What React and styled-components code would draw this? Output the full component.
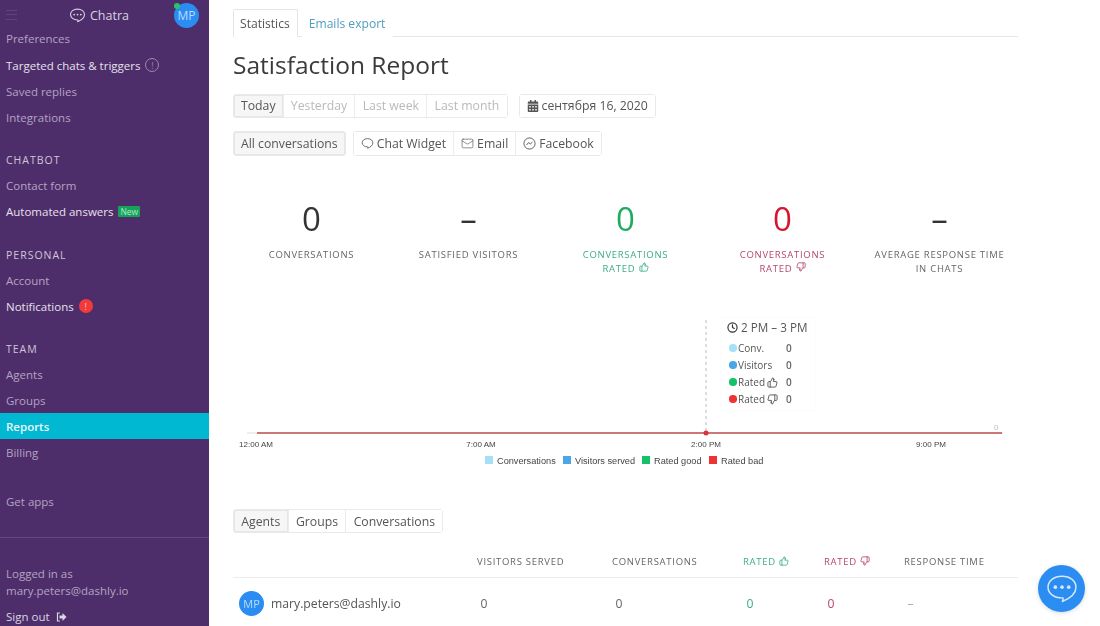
import React from "react";
import styled, { createGlobalStyle } from "styled-components";
import { ThumbsUp, ThumbsDown, Clock, Mail } from "lucide-react";
import { FaCalendarAlt } from "react-icons/fa";

const Global = createGlobalStyle`
  html, body { margin: 0; padding: 0; background: #fff; overflow: hidden; }
  * { box-sizing: border-box; }
  body { font-family: "Open Sans", "Liberation Sans", sans-serif; color: #333; }
`;

const Page = styled.div`
  position: relative;
  display: flex;
  width: 1100px;
  height: 626px;
  overflow: hidden;
  filter: blur(0.45px);
`;

const Sidebar = styled.aside`
  width: 209px;
  flex: none;
  background: #4e2e6a;
  display: flex;
  flex-direction: column;
  font-size: 11.5px;
`;

const SideHeader = styled.div`
  position: relative;
  height: 25px;
  flex: none;
  display: flex;
  align-items: center;
  justify-content: center;
  gap: 4px;
  padding: 5px 11px 0 0;
  color: #d9d2e1;
  font-size: 12.5px;
`;

const Burger = styled.span`
  position: absolute;
  left: 6px;
  top: 10px;
  width: 11px;
  height: 10px;
  border-top: 1px solid #5f4379;
  border-bottom: 1px solid #5f4379;
  &::after {
    content: "";
    display: block;
    margin-top: 3px;
    border-top: 1px solid #5f4379;
  }
`;

const Avatar = styled.span`
  position: relative;
  display: flex;
  align-items: center;
  justify-content: center;
  flex: none;
  width: ${(p) => p.$size}px;
  height: ${(p) => p.$size}px;
  border-radius: 50%;
  background: #2b8cf2;
  color: #b9dcfb;
  font-size: ${(p) => p.$font}px;
`;

const SideAvatar = styled(Avatar)`
  position: absolute;
  left: 174px;
  top: 3px;
  &::before {
    content: "";
    position: absolute;
    left: 0;
    top: 0;
    width: 6px;
    height: 6px;
    border-radius: 50%;
    background: #27c46b;
  }
`;

const NavItem = styled.div`
  height: 26px;
  flex: none;
  display: flex;
  align-items: center;
  gap: 5px;
  padding: 0 0 0 6px;
  margin-top: ${(p) => p.$gap || 0}px;
  color: ${(p) => (p.$active ? "#eef6f9" : p.$bright ? "#e6e0ec" : "#b3a3c3")};
  background: ${(p) => (p.$active ? "#00b8d2" : "transparent")};
  font-weight: ${(p) => (p.$active ? 600 : 400)};
`;

const NavHeading = styled.div`
  height: 26px;
  flex: none;
  display: flex;
  align-items: center;
  padding: 2px 0 0 6px;
  margin-top: ${(p) => p.$gap}px;
  color: #cfc6d9;
  font-size: 10.5px;
  letter-spacing: 1px;
`;

const InfoBadge = styled.span`
  width: 14px;
  height: 14px;
  border-radius: 50%;
  border: 1px solid #9c89ae;
  color: #9c89ae;
  font-size: 9px;
  display: flex;
  align-items: center;
  justify-content: center;
`;

const NewBadge = styled.span`
  background: #15a35b;
  color: #b4e6c9;
  font-size: 8.5px;
  line-height: 11px;
  padding: 0 2px;
  border-radius: 1px;
`;

const AlertBadge = styled.span`
  width: 14px;
  height: 14px;
  border-radius: 50%;
  background: #f33a3a;
  color: #ffc9c9;
  font-size: 9px;
  display: flex;
  align-items: center;
  justify-content: center;
`;

const SideRule = styled.div`
  height: 1px;
  flex: none;
  margin-top: 23px;
  background: #64477f;
`;

const LoggedIn = styled.div`
  margin-top: 27px;
  padding-left: 6px;
  line-height: 17px;
  color: #b3a3c3;
`;

const SignOut = styled.div`
  display: flex;
  align-items: center;
  gap: 6px;
  margin-top: 9px;
  padding-left: 6px;
  line-height: 17px;
  color: #dcd5e3;
`;

const Main = styled.main`
  width: 785px;
  margin-left: 24px;
  flex: none;
  display: flex;
  flex-direction: column;
`;

const Tabs = styled.div`
  display: flex;
  height: 37px;
  flex: none;
  padding-top: 9px;
  border-bottom: 1px solid #e6e6e6;
`;

const Tab = styled.div`
  height: 28px;
  padding: 0 7px 0 6px;
  margin-right: 4px;
  display: flex;
  align-items: center;
  font-size: 12.1px;
  color: ${(p) => (p.$active ? "#555" : "#4f9dbf")};
  background: #fff;
  border: 1px solid ${(p) => (p.$active ? "#e6e6e6" : "transparent")};
  border-bottom: 0;
  border-radius: 2px 2px 0 0;
`;

const Title = styled.h1`
  margin: 10px 0 0;
  height: 36px;
  line-height: 36px;
  font-size: 24.5px;
  font-weight: 400;
  color: #3b3b3b;
`;

const Row = styled.div`
  display: flex;
  gap: ${(p) => p.$gap || 0}px;
  margin-top: ${(p) => p.$top}px;
  flex: none;
`;

const Group = styled.div`
  display: flex;
  height: ${(p) => p.$h || 24}px;
  border: 1px solid #e9e9e9;
  border-radius: 3px;
  background: #fff;
`;

const Seg = styled.div`
  display: flex;
  align-items: center;
  gap: 3px;
  padding: 0 ${(p) => p.$pad || 7}px ${(p) => (p.$flat ? 0 : 1)}px;
  font-size: 12.25px;
  color: ${(p) => (p.$muted ? "#b9b9b9" : "#555")};
  background: ${(p) => (p.$on ? "#f6f6f6" : "#fff")};
  border-right: 1px solid #ececec;
  box-shadow: ${(p) => (p.$on ? "inset 0 0 0 1px #e6e6e6" : "none")};
  &:last-child { border-right: 0; }
`;

const Stats = styled.div`
  display: grid;
  grid-template-columns: repeat(5, 1fr);
  margin-top: 41px;
  flex: none;
`;

const Stat = styled.div`
  display: flex;
  flex-direction: column;
  align-items: center;
  text-align: center;
`;

const StatValue = styled.div`
  height: 44px;
  line-height: 44px;
  font-size: 33px;
  color: ${(p) => p.$color || "#333"};
`;

const StatLabel = styled.div`
  margin-top: 7px;
  font-size: 9.5px;
  line-height: 14px;
  letter-spacing: 0.72px;
  color: ${(p) => p.$color || "#666"};
`;

const Chart = styled.div`
  position: relative;
  height: 170px;
  margin-top: 30px;
  flex: none;
`;

const ChartSvg = styled.svg`
  position: absolute;
  left: 0;
  top: 0;
  width: 785px;
  height: 170px;
  font-family: "Liberation Sans", Arial, sans-serif;
`;

const ChartTip = styled.div`
  position: absolute;
  left: 489px;
  top: 12px;
  width: 93px;
  height: 92px;
  padding: 1px 0 0 7px;
  background: rgba(255, 255, 255, 0.9);
  box-shadow: 0 0 3px rgba(0, 0, 0, 0.04);
  color: #555;
`;

const TipTitle = styled.div`
  display: flex;
  align-items: center;
  gap: 3px;
  margin-left: -2px;
  font-size: 11.7px;
  line-height: 17px;
  margin-bottom: 3.5px;
`;

const TipRow = styled.div`
  display: flex;
  align-items: center;
  height: 17px;
  font-size: 10px;
`;

const Dot = styled.span`
  width: 7.5px;
  height: 7.5px;
  border-radius: 50%;
  background: ${(p) => p.$c};
  margin-right: 1.5px;
`;

const TipLabel = styled.span`
  display: flex;
  align-items: center;
  gap: 2px;
  width: 48px;
`;

const TipValue = styled.span`
  font-weight: 600;
  color: #666;
`;

const TableHead = styled.div`
  display: grid;
  grid-template-columns: 244px 135px 131px 81px 80px 1fr;
  align-items: center;
  height: 45px;
  padding-top: 12px;
  border-bottom: 1px solid #ececec;
  flex: none;
`;

const HeadCell = styled.div`
  display: flex;
  align-items: center;
  gap: 3px;
  font-size: 9.5px;
  letter-spacing: 0.72px;
  color: ${(p) => p.$color || "#666"};
`;

const TableRow = styled.div`
  display: grid;
  grid-template-columns: 244px 135px 131px 81px 80px 1fr;
  align-items: center;
  height: 50px;
  flex: none;
  font-size: 12.2px;
`;

const AgentCell = styled.div`
  display: flex;
  align-items: center;
  gap: 7px;
  padding-left: 6px;
  color: #555;
`;

const Value = styled.div`
  padding-left: 3.5px;
  color: ${(p) => p.$color || "#666"};
`;

const ChatFab = styled.div`
  position: absolute;
  left: 1038px;
  top: 565px;
  width: 47px;
  height: 47px;
  border-radius: 50%;
  background: #2b8cf2;
  display: flex;
  align-items: center;
  justify-content: center;
  box-shadow: 0 1px 4px rgba(0, 0, 0, 0.15);
`;

const Bubble = ({ size = 14, color = "currentColor", sw = 1.4, dots = true }) => (
  <svg width={size} height={size} viewBox="0 0 28 28" fill="none">
    <path
      d="M14 3.5c6.6 0 11.5 3.8 11.5 9 0 5.8-6 9.600-11.200 11.800.5-1 .7-2 .6-3-.3 0-.6 0-.9 0C7.400 21.300 2.500 17.500 2.500 12.500c0-5.200 4.900-9 11.500-9z"
      stroke={color}
      strokeWidth={sw * 2}
      strokeLinejoin="round"
    />
    {dots && (
      <g fill={color}>
        <circle cx="8.500" cy="12.500" r="1.500" />
        <circle cx="14" cy="12.500" r="1.500" />
        <circle cx="19.500" cy="12.500" r="1.500" />
      </g>
    )}
  </svg>
);

const Messenger = () => (
  <svg width="13" height="13" viewBox="0 0 14 14" fill="none" stroke="#555" strokeWidth="1">
    <circle cx="7" cy="7" r="6" />
    <path d="M3.800 8.600 6 6l1.800 1.500L10.200 5.400" strokeLinejoin="round" />
  </svg>
);

const Logout = () => (
  <svg width="11" height="10" viewBox="0 0 11 10" fill="#dcd5e3">
    <path d="M4 1H1.500v8H4" fill="none" stroke="#dcd5e3" strokeWidth="1.200" />
    <path d="M3.500 3.500H6.500V1L10.500 5 6.500 9V6.500H3.500z" />
  </svg>
);

const Up = ({ s = 10, c }) => <ThumbsUp size={s} color={c} strokeWidth={2} />;
const Down = ({ s = 10, c }) => <ThumbsDown size={s} color={c} strokeWidth={2} />;

const GREEN = "#3bae82";
const RED = "#b8476b";

const stats = [
  { value: "0", label: <>CONVERSATIONS</> },
  { value: "–", label: <>SATISFIED VISITORS</> },
  { value: "0", color: "#1eab5f", labelColor: GREEN, label: <>CONVERSATIONS<br />RATED <Up c={GREEN} /></> },
  { value: "0", color: "#d5142f", labelColor: RED, label: <>CONVERSATIONS<br />RATED <Down c={RED} /></> },
  { value: "–", label: <>AVERAGE RESPONSE TIME<br />IN CHATS</> },
];

const ticks = [["12:00 AM", 23], ["7:00 AM", 248], ["2:00 PM", 473], ["9:00 PM", 698]];
const legend = [
  ["Conversations", 252, "#a6e0f8"],
  ["Visitors served", 330, "#4aa6e4"],
  ["Rated good", 409, "#16c269"],
  ["Rated bad", 476, "#ee3333"],
];

export default function App() {
  return (
    <Page>
      <Global />
      <Sidebar>
        <SideHeader>
          <Burger />
          <Bubble size={17} color="#d9d2e1" sw={0.9} />
          Chatra
          <SideAvatar $size={25} $font={12}>MP</SideAvatar>
        </SideHeader>
        <NavItem>Preferences</NavItem>
        <NavItem $bright $gap={1}>Targeted chats &amp; triggers <InfoBadge>!</InfoBadge></NavItem>
        <NavItem>Saved replies</NavItem>
        <NavItem>Integrations</NavItem>
        <NavHeading $gap={16}>CHATBOT</NavHeading>
        <NavItem>Contact form</NavItem>
        <NavItem $bright>Automated answers <NewBadge>New</NewBadge></NavItem>
        <NavHeading $gap={17}>PERSONAL</NavHeading>
        <NavItem>Account</NavItem>
        <NavItem $bright>Notifications <AlertBadge>!</AlertBadge></NavItem>
        <NavHeading $gap={16}>TEAM</NavHeading>
        <NavItem>Agents</NavItem>
        <NavItem>Groups</NavItem>
        <NavItem $active>Reports</NavItem>
        <NavItem>Billing</NavItem>
        <NavItem $gap={23}>Get apps</NavItem>
        <SideRule />
        <LoggedIn>Logged in as<br />mary.peters@dashly.io</LoggedIn>
        <SignOut>Sign out <Logout /></SignOut>
      </Sidebar>

      <Main>
        <Tabs>
          <Tab $active>Statistics</Tab>
          <Tab>Emails export</Tab>
        </Tabs>
        <Title>Satisfaction Report</Title>
        <Row $top={11} $gap={11}>
          <Group>
            <Seg $on>Today</Seg>
            <Seg $muted $pad={7.3}>Yesterday</Seg>
            <Seg $muted $pad={7.3}>Last week</Seg>
            <Seg $muted $pad={7.3}>Last month</Seg>
          </Group>
          <Group>
            <Seg><FaCalendarAlt size={12} color="#555" />сентября 16, 2020</Seg>
          </Group>
        </Row>
        <Row $top={13} $gap={7}>
          <Group $h={25}><Seg $on>All conversations</Seg></Group>
          <Group $h={25}>
            <Seg><Bubble size={13} color="#555" sw={0.9} dots={false} />Chat Widget</Seg>
            <Seg><Mail size={13} color="#555" strokeWidth={1.2} />Email</Seg>
            <Seg><Messenger />Facebook</Seg>
          </Group>
        </Row>

        <Stats>
          {stats.map((s, i) => (
            <Stat key={i}>
              <StatValue $color={s.color}>{s.value}</StatValue>
              <StatLabel $color={s.labelColor}>{s.label}</StatLabel>
            </Stat>
          ))}
        </Stats>

        <Chart>
          <ChartSvg viewBox="0 0 785 170">
            <line x1="473" y1="14" x2="473" y2="127" stroke="#bbb" strokeDasharray="3 3" />
            <line x1="14" y1="127" x2="770" y2="127" stroke="#ddd" />
            <line x1="24" y1="127" x2="769" y2="127" stroke="#c0504f" strokeWidth="1.300" />
            <circle cx="473" cy="127" r="2.500" fill="#d8333f" />
            <text x="761" y="124" fontSize="8" fill="#bbb">0</text>
            {ticks.map(([t, x]) => (
              <text key={t} x={x} y="141" fontSize="8" fill="#444" textAnchor="middle">{t}</text>
            ))}
            {legend.map(([t, x, c]) => (
              <g key={t}>
                <rect x={x} y="150" width="8" height="8" fill={c} />
                <text x={x + 12} y="157.500" fontSize="9.200" fill="#444">{t}</text>
              </g>
            ))}
          </ChartSvg>
          <ChartTip>
            <TipTitle><Clock size={11} color="#333" strokeWidth={2.500} />2 PM – 3 PM</TipTitle>
            <TipRow><Dot $c="#a6e0f8" /><TipLabel>Conv.</TipLabel><TipValue>0</TipValue></TipRow>
            <TipRow><Dot $c="#4aa6e4" /><TipLabel>Visitors</TipLabel><TipValue>0</TipValue></TipRow>
            <TipRow><Dot $c="#16c269" /><TipLabel>Rated <Up s={11} c="#555" /></TipLabel><TipValue>0</TipValue></TipRow>
            <TipRow><Dot $c="#ee3333" /><TipLabel>Rated <Down s={11} c="#555" /></TipLabel><TipValue>0</TipValue></TipRow>
          </ChartTip>
        </Chart>

        <Row $top={33}>
          <Group>
            <Seg $on $flat $pad={7.3}>Agents</Seg>
            <Seg $flat $pad={7.3}>Groups</Seg>
            <Seg $flat $pad={7.3}>Conversations</Seg>
          </Group>
        </Row>
        <TableHead>
          <span />
          <HeadCell>VISITORS SERVED</HeadCell>
          <HeadCell>CONVERSATIONS</HeadCell>
          <HeadCell $color={GREEN}>RATED <Up c={GREEN} /></HeadCell>
          <HeadCell $color={RED}>RATED <Down c={RED} /></HeadCell>
          <HeadCell>RESPONSE TIME</HeadCell>
        </TableHead>
        <TableRow>
          <AgentCell><Avatar $size={25} $font={11}>MP</Avatar>mary.peters@dashly.io</AgentCell>
          <Value>0</Value>
          <Value>0</Value>
          <Value $color={GREEN}>0</Value>
          <Value $color={RED}>0</Value>
          <Value $color="#aaa">–</Value>
        </TableRow>
      </Main>

      <ChatFab><Bubble size={34} color="#d6e9fc" sw={0.6} /></ChatFab>
    </Page>
  );
}
